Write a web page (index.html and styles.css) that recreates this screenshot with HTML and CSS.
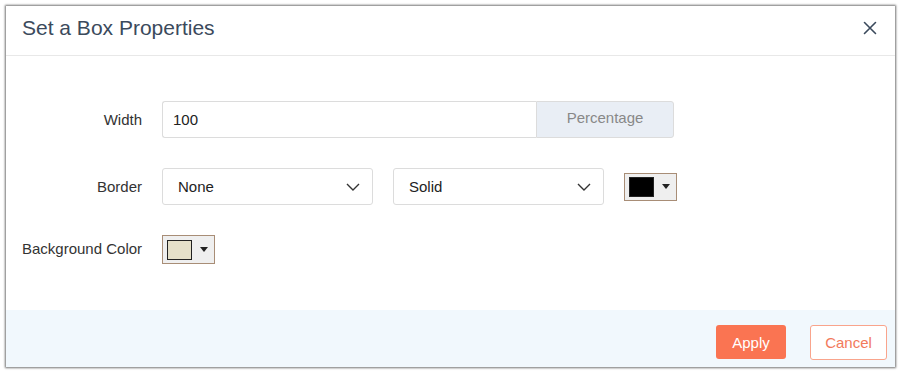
FILE: index.html
```html
<!DOCTYPE html>
<html lang="en">

<head>
    <meta charset="UTF-8">
    <meta name="viewport" content="width=device-width, initial-scale=1.0">
    <title>Set a Box Properties</title>
    <link rel="stylesheet" href="styles.css">
</head>

<body>
    <div class="dialog">
        <div class="dialog-header">
            <h2>Set a Box Properties</h2>
            <button class="close-btn" aria-label="Close">
                <svg width="14" height="14" viewBox="0 0 14 14">
                    <path d="M1.5 1.5 L12.5 12.5 M12.5 1.5 L1.5 12.5" stroke="#3b4a5c" stroke-width="1.6" fill="none" stroke-linecap="round" />
                </svg>
            </button>
        </div>

        <div class="dialog-body">
            <label class="field-label">Width</label>
            <div class="input-group">
                <input type="text" class="text-input" value="100">
                <span class="addon">Percentage</span>
            </div>

            <label class="field-label">Border</label>
            <div class="field-row">
                <div class="select-box">
                    <span>None</span>
                    <svg width="14" height="8" viewBox="0 0 14 8">
                        <path d="M1 1 L7 7 L13 1" stroke="#333" stroke-width="1.4" fill="none" />
                    </svg>
                </div>
                <div class="select-box">
                    <span>Solid</span>
                    <svg width="14" height="8" viewBox="0 0 14 8">
                        <path d="M1 1 L7 7 L13 1" stroke="#333" stroke-width="1.4" fill="none" />
                    </svg>
                </div>
                <div class="color-picker border-picker">
                    <span class="swatch swatch-black"></span>
                    <span class="caret"></span>
                </div>
            </div>

            <label class="field-label label-top">Background Color</label>
            <div class="field-row">
                <div class="color-picker bg-picker">
                    <span class="swatch swatch-cream"></span>
                    <span class="caret"></span>
                </div>
            </div>
        </div>

        <div class="dialog-footer">
            <button class="btn btn-apply">Apply</button>
            <button class="btn btn-cancel">Cancel</button>
        </div>
    </div>
</body>

</html>
```

FILE: styles.css
```css
body {
    font-family: 'Liberation Sans', Arial, sans-serif;
    margin: 0;
    padding: 6px;
    background: #fff;
}

.dialog {
    width: 889px;
    height: 361px;
    background: #fff;
    box-shadow: 0 0 2px 1px rgba(0, 0, 0, 0.55);
    display: flex;
    flex-direction: column;
}

.dialog-header {
    height: 49px;
    border-bottom: 1px solid #e8e8e8;
    display: flex;
    align-items: center;
    justify-content: space-between;
    padding: 0 16px;
}

.dialog-header h2 {
    margin: 0 0 5px;
    font-size: 21px;
    font-weight: normal;
    color: #3b4a5c;
}

.close-btn {
    background: none;
    border: none;
    padding: 0;
    margin: 0 2px 5px 0;
    width: 14px;
    height: 14px;
    cursor: pointer;
}

.close-btn svg {
    display: block;
}

.dialog-body {
    flex: 1;
    padding: 45px 16px 0;
    display: grid;
    grid-template-columns: 120px auto;
    column-gap: 20px;
    row-gap: 30px;
    align-content: start;
    align-items: center;
}

.field-label {
    text-align: right;
    font-size: 15px;
    color: #333;
    white-space: nowrap;
}

.label-top {
    margin-bottom: 3px;
}

.input-group {
    display: flex;
    width: 512px;
    height: 37px;
}

.text-input {
    width: 374px;
    box-sizing: border-box;
    border: 1px solid #dcdcdc;
    border-right: none;
    border-radius: 3px 0 0 3px;
    padding: 0 10px;
    font-family: inherit;
    font-size: 15px;
    color: #222;
    outline: none;
}

.addon {
    width: 138px;
    box-sizing: border-box;
    background: #e9eef5;
    border: 1px solid #dcdcdc;
    border-radius: 0 3px 3px 0;
    color: #888;
    font-size: 15px;
    display: flex;
    align-items: center;
    justify-content: center;
    padding-bottom: 4px;
}

.field-row {
    display: flex;
    align-items: center;
    gap: 20px;
}

.select-box {
    width: 211px;
    height: 37px;
    box-sizing: border-box;
    border: 1px solid #dcdcdc;
    border-radius: 3px;
    display: flex;
    align-items: center;
    justify-content: space-between;
    padding: 0 12px 0 15px;
    font-size: 15px;
    color: #222;
}

.select-box svg {
    display: block;
}

.color-picker {
    width: 53px;
    box-sizing: border-box;
    border: 1px solid #a88d76;
    background: #efefef;
    display: flex;
    align-items: center;
    padding-left: 4px;
}

.border-picker {
    height: 28px;
}

.bg-picker {
    height: 29px;
}

.swatch {
    width: 25px;
    height: 20px;
    box-sizing: border-box;
    border: 1px solid #222;
}

.swatch-black {
    background: #000;
}

.swatch-cream {
    background: #e5e0c9;
}

.caret {
    margin-left: 8px;
    width: 0;
    height: 0;
    border-left: 4.5px solid transparent;
    border-right: 4.5px solid transparent;
    border-top: 5px solid #222;
}

.dialog-footer {
    height: 57px;
    box-sizing: border-box;
    background: #f1f8fd;
    display: flex;
    justify-content: flex-end;
    align-items: flex-start;
    gap: 24px;
    padding: 15px 8px 0;
}

.btn {
    font-family: inherit;
    font-size: 15px;
    border-radius: 3px;
    cursor: pointer;
}

.btn-apply {
    width: 70px;
    height: 34px;
    background: #fa7452;
    border: none;
    color: #fff;
}

.btn-cancel {
    width: 77px;
    height: 35px;
    background: #fff;
    border: 1px solid #f9a48c;
    color: #f27a5c;
}
```
